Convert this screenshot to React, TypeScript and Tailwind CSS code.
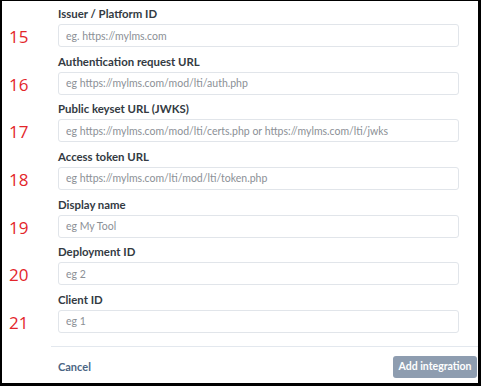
const fields = [
  { n: '15', label: 'Issuer / Platform ID', ph: 'eg. https://mylms.com' },
  { n: '16', label: 'Authentication request URL', ph: 'eg https://mylms.com/mod/lti/auth.php' },
  { n: '17', label: 'Public keyset URL (JWKS)', ph: 'eg https://mylms.com/mod/lti/certs.php or https://mylms.com/lti/jwks' },
  { n: '18', label: 'Access token URL', ph: 'eg https://mylms.com/lti/mod/lti/token.php' },
  { n: '19', label: 'Display name', ph: 'eg My Tool' },
  { n: '20', label: 'Deployment ID', ph: 'eg 2' },
  { n: '21', label: 'Client ID', ph: 'eg 1' },
];

export default function App() {
  return (
    <div className="w-[481px] h-[386px] bg-black pt-[1px] pl-[2px] pr-[3px] pb-[3px]">
      <div className="h-full bg-white flex flex-col font-['Lato',sans-serif]">
        <div className="flex flex-col pt-[6px] pr-[19px]">
          {fields.map((f) => (
            <div key={f.n} className="h-[47.67px] flex flex-col">
              <div className="ml-[56px] h-[14px] leading-[14px] text-[11.4px] font-bold text-[#333a42]">
                {f.label}
              </div>
              <div className="mt-[3px] flex items-center">
                <div className="w-[56px] pl-[7px] pt-[2px] text-[17px] leading-none text-[#e3262b] font-['Open_Sans',sans-serif]">
                  {f.n}
                </div>
                <input
                  readOnly
                  placeholder={f.ph}
                  className="flex-1 h-[23px] rounded-[3px] border border-[#e1e5ea] px-[7px] text-[10.5px] text-[#333] placeholder:text-[#8b9096] outline-none"
                />
              </div>
            </div>
          ))}
        </div>
        <div className="mt-auto ml-[49px] border-t border-[#e3e8ee] h-[37px] flex items-center justify-between pt-[4px]">
          <span className="ml-[7px] text-[11px] font-bold text-[#4b6584]">Cancel</span>
          <button className="mr-[1px] h-[22px] w-[84px] rounded-[3px] bg-[#8e9db0] text-white text-[10.5px] font-bold">
            Add integration
          </button>
        </div>
      </div>
    </div>
  );
}
